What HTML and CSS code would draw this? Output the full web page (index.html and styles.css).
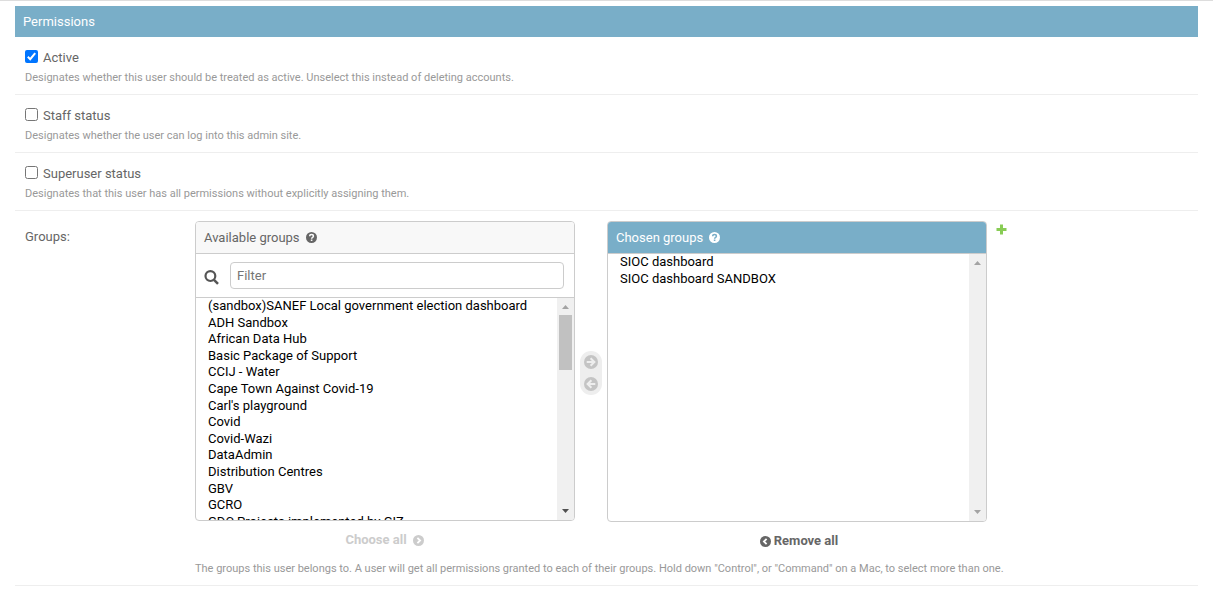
FILE: index.html
```html
<!DOCTYPE html>
<html lang="en">
<head>
<meta charset="utf-8">
<title>Permissions</title>
<link rel="stylesheet" href="styles.css">
</head>
<body>
<main class="module">
  <h2 class="module-title">Permissions</h2>
  <div class="row">
    <label class="check-label"><svg class="check" viewBox="0 0 13 13"><rect width="13" height="13" rx="2" fill="#0075ff"/><path d="M2.8 6.8 5.2 9.2 10.2 3.2" fill="none" stroke="#fff" stroke-width="2"/></svg><span>Active</span></label>
    <p class="help">Designates whether this user should be treated as active. Unselect this instead of deleting accounts.</p>
  </div>
  <div class="row">
    <label class="check-label"><svg class="check" viewBox="0 0 13 13"><rect x=".5" y=".5" width="12" height="12" rx="2" fill="#fff" stroke="#767676"/></svg><span>Staff status</span></label>
    <p class="help">Designates whether the user can log into this admin site.</p>
  </div>
  <div class="row">
    <label class="check-label"><svg class="check" viewBox="0 0 13 13"><rect x=".5" y=".5" width="12" height="12" rx="2" fill="#fff" stroke="#767676"/></svg><span>Superuser status</span></label>
    <p class="help">Designates that this user has all permissions without explicitly assigning them.</p>
  </div>
  <div class="row groups-row">
    <div class="groups-label">Groups:</div>
    <div class="groups-field">
      <div class="selector">
        <div class="column">
          <section class="box available">
            <h3 class="box-title">Available groups <svg class="help-icon" viewBox="0 0 11 11"><circle cx="5.5" cy="5.5" r="5.5" fill="#666"/><path d="M3.7 4.3C3.7 2 7.4 2.1 7.4 4.2 7.4 5.4 5.6 5.3 5.6 6.8" fill="none" stroke="#f8f8f8" stroke-width="1.5"/><path d="M4.8 7.6h1.6v1.5H4.8z" fill="#f8f8f8"/></svg></h3>
            <div class="filter">
              <svg class="search" viewBox="0 0 15 15"><circle cx="6.4" cy="6.1" r="4.9" fill="none" stroke="#555" stroke-width="2.2"/><path d="m10 9.8 4 4" stroke="#555" stroke-width="2.4"/></svg>
              <input class="filter-input" type="text" placeholder="Filter">
            </div>
            <div class="list-area">
              <ul class="options">
                <li>(sandbox)SANEF Local government election dashboard</li>
                <li>ADH Sandbox</li>
                <li>African Data Hub</li>
                <li>Basic Package of Support</li>
                <li>CCIJ - Water</li>
                <li>Cape Town Against Covid-19</li>
                <li>Carl's playground</li>
                <li>Covid</li>
                <li>Covid-Wazi</li>
                <li>DataAdmin</li>
                <li>Distribution Centres</li>
                <li>GBV</li>
                <li>GCRO</li>
                <li>GDC Projects implemented by GIZ</li>
              </ul>
              <div class="scrollbar"><svg class="arrow" viewBox="0 0 7 4"><path d="M0 4h7L3.5 0z" fill="#a3a3a3"/></svg><i class="thumb"></i><svg class="arrow down" viewBox="0 0 7 4"><path d="M0 0h7L3.5 4z" fill="#505050"/></svg></div>
            </div>
          </section>
          <a class="all choose">Choose all <svg class="all-icon" viewBox="0 0 11 11"><circle cx="5.5" cy="5.5" r="5.5" fill="#ccc"/><path d="m4.4 2.8 2.7 2.7-2.7 2.7" fill="none" stroke="#fff" stroke-width="1.8"/></svg></a>
        </div>
        <div class="chooser">
          <svg class="move" viewBox="0 0 14 14"><circle cx="7" cy="7" r="7" fill="#c4c4c4"/><path d="M2.7 7h8M6.6 3.2 10.4 7 6.6 10.8" fill="none" stroke="#eee" stroke-width="2"/></svg>
          <svg class="move" viewBox="0 0 14 14"><circle cx="7" cy="7" r="7" fill="#c4c4c4"/><path d="M11.3 7h-8M7.4 3.2 3.6 7 7.4 10.8" fill="none" stroke="#eee" stroke-width="2"/></svg>
        </div>
        <div class="column">
          <section class="box chosen">
            <h3 class="box-title">Chosen groups <svg class="help-icon" viewBox="0 0 11 11"><circle cx="5.5" cy="5.5" r="5.5" fill="#fff"/><path d="M3.7 4.3C3.7 2 7.4 2.1 7.4 4.2 7.4 5.4 5.6 5.3 5.6 6.8" fill="none" stroke="#79aec8" stroke-width="1.5"/><path d="M4.8 7.6h1.6v1.5H4.8z" fill="#79aec8"/></svg></h3>
            <div class="list-area">
              <ul class="options">
                <li>SIOC dashboard</li>
                <li>SIOC dashboard SANDBOX</li>
              </ul>
              <div class="scrollbar"><svg class="arrow" viewBox="0 0 7 4"><path d="M0 4h7L3.5 0z" fill="#a3a3a3"/></svg><svg class="arrow down" viewBox="0 0 7 4"><path d="M0 0h7L3.5 4z" fill="#a3a3a3"/></svg></div>
            </div>
          </section>
          <a class="all remove"><svg class="all-icon" viewBox="0 0 11 11"><circle cx="5.5" cy="5.5" r="5.5" fill="#666"/><path d="M6.6 2.8 3.9 5.5l2.7 2.7" fill="none" stroke="#fff" stroke-width="1.8"/></svg> Remove all</a>
        </div>
        <svg class="add" viewBox="0 0 11 11"><path d="M4 0.5h3V4h3.5v3H7v3.5H4V7H.5V4H4z" fill="#8c5"/></svg>
      </div>
      <p class="help groups-help">The groups this user belongs to. A user will get all permissions granted to each of their groups. Hold down "Control", or "Command" on a Mac, to select more than one.</p>
    </div>
  </div>
</main>
</body>
</html>
```
FILE: styles.css
```css
* { box-sizing: border-box; }
body {
  margin: 0;
  height: 593px;
  overflow: hidden;
  border-top: 1px solid #ddd;
  background: #fff;
  color: #666;
  font: 13px/17px Roboto, "Liberation Sans", sans-serif;
}
h2, h3, p, ul { margin: 0; padding: 0; font-weight: 400; }
svg { display: block; flex: none; }
.module { margin: 5px 15px 0; }
.module-title {
  height: 31px;
  padding: 0 8px;
  background: #79aec8;
  color: #fff;
  font-size: 13px;
  line-height: 31px;
}
.row { height: 58px; padding: 12px 10px 0; border-bottom: 1px solid #eee; }
.check-label { display: flex; gap: 5px; height: 17px; }
.check { width: 13px; height: 13px; margin-top: 1px; }
.help { margin-top: 4px; color: #999; font-size: 11px; line-height: 15px; white-space: nowrap; }
.groups-row { display: flex; height: 375px; padding-top: 10px; }
.groups-label { width: 170px; padding-top: 7px; }
.selector { display: flex; align-items: flex-start; }
.column { width: 380px; }
.box {
  display: flex;
  flex-direction: column;
  height: 300px;
  overflow: hidden;
  border: 1px solid #ccc;
  border-radius: 4px;
}
.chosen { height: 301px; }
.box-title {
  display: flex;
  align-items: center;
  gap: 6px;
  height: 32px;
  padding: 0 8px;
  border-bottom: 1px solid #ccc;
  background: #f8f8f8;
  font-size: 13px;
}
.chosen .box-title { background: #79aec8; color: #fff; }
.help-icon { width: 11px; height: 11px; }
.filter {
  display: flex;
  align-items: center;
  gap: 11px;
  height: 44px;
  padding: 0 10px 0 8px;
  border-bottom: 1px solid #ccc;
}
.search { width: 15px; height: 15px; margin-top: 3px; }
.filter-input {
  flex: 1;
  height: 27px;
  padding: 0 6px;
  border: 1px solid #ccc;
  border-radius: 4px;
  font: inherit;
}
.filter-input::placeholder { color: #757575; }
.list-area { display: flex; flex: 1; min-height: 0; }
.options { flex: 1; overflow: hidden; padding-left: 12px; list-style: none; color: #000; }
.options li { height: 16.6px; line-height: 16.6px; white-space: nowrap; }
.scrollbar {
  display: flex;
  flex-direction: column;
  align-items: flex-start;
  width: 17px;
  padding: 7px 0 7px 2px;
  background: #f0f0f0;
}
.arrow { width: 7px; height: 4px; margin-left: 3px; }
.down { margin-top: auto; }
.thumb { width: 13px; height: 55px; margin-top: 6px; background: #c1c1c1; }
.chooser {
  display: flex;
  flex-direction: column;
  align-items: center;
  justify-content: space-between;
  width: 22px;
  height: 44px;
  margin: 130px 5px 0;
  padding: 4px 0;
  border-radius: 11px;
  background: #eee;
}
.move { width: 14px; height: 14px; }
.all { display: flex; align-items: center; justify-content: center; gap: 6px; font-weight: 700; }
.all-icon { width: 11px; height: 11px; margin-top: 2px; }
.choose { margin-top: 10px; padding-right: 1px; color: #ccc; }
.remove { gap: 3px; margin-top: 10px; padding-left: 4px; }
.add { width: 11px; height: 11px; margin: 3px 0 0 9px; }
.groups-help { margin-top: 12px; }
```
